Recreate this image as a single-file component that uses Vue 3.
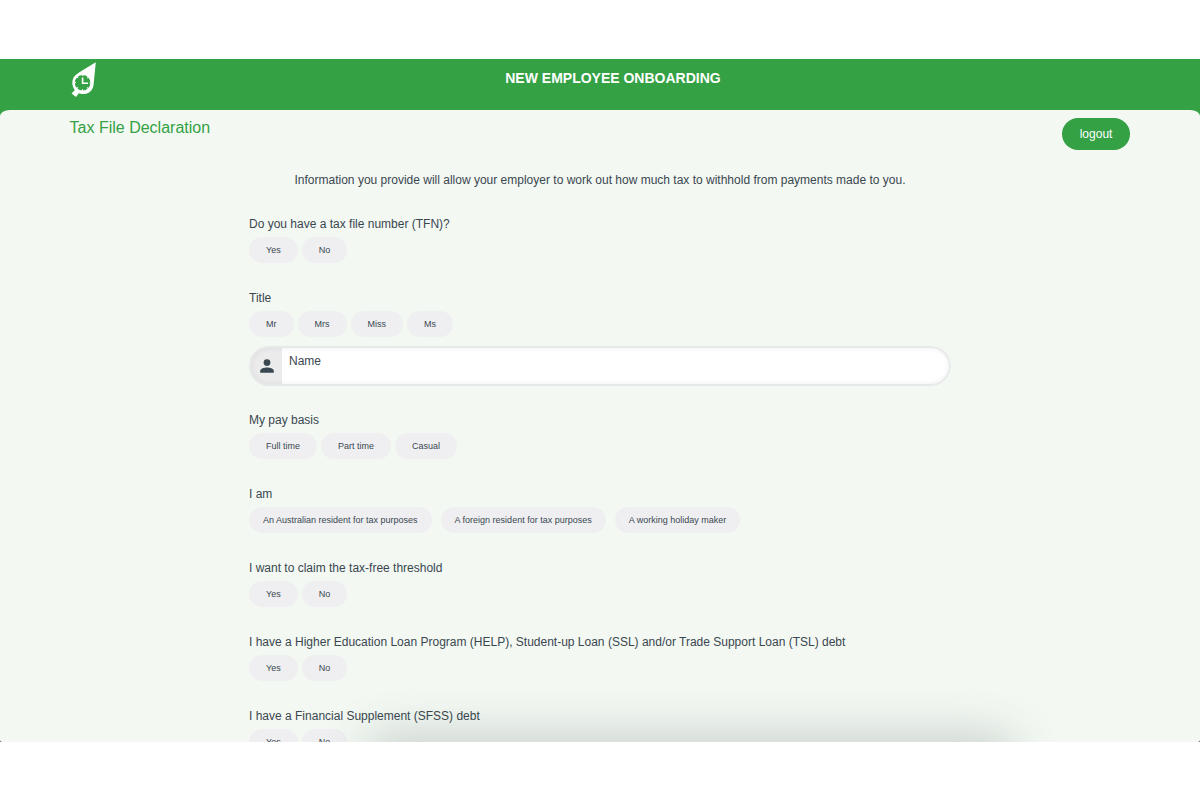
<script setup>
import { ref } from 'vue'

const answers = ref({})
const name = ref('')

const before = [
  { id: 'tfn', label: 'Do you have a tax file number (TFN)?', options: ['Yes', 'No'] },
  { id: 'title', label: 'Title', options: ['Mr', 'Mrs', 'Miss', 'Ms'] },
]
const after = [
  { id: 'basis', label: 'My pay basis', options: ['Full time', 'Part time', 'Casual'] },
  {
    id: 'residency',
    label: 'I am',
    wide: true,
    options: [
      'An Australian resident for tax purposes',
      'A foreign resident for tax purposes',
      'A working holiday maker',
    ],
  },
  { id: 'threshold', label: 'I want to claim the tax-free threshold', options: ['Yes', 'No'] },
  {
    id: 'help',
    label: 'I have a Higher Education Loan Program (HELP), Student-up Loan (SSL) and/or Trade Support Loan (TSL) debt',
    options: ['Yes', 'No'],
  },
  { id: 'sfss', label: 'I have a Financial Supplement (SFSS) debt', options: ['Yes', 'No'] },
]
</script>

<template>
  <div class="screen">
    <div class="app">
      <header class="bar">
        <div class="wrap bar-row">
          <svg class="logo" viewBox="0 0 26 36" aria-hidden="true">
            <path
              fill="#fff"
              fill-rule="evenodd"
              d="M25.8 0.3 L23.6 22.5 C23 29 18 32.6 11.4 32 L8.8 31.3 L6 34.9 L1.6 31.4 L4.8 28 C1.5 23.8 1.4 17.6 5.2 13.6 C6.6 12.2 8 11.2 9.8 10 Z M12.6 12.9 A7.8 7.8 0 1 0 12.6 28.5 A7.8 7.8 0 1 0 12.6 12.9 Z"
            />
            <circle cx="12.6" cy="20.7" r="7.3" fill="none" stroke="#fff" stroke-width="1.4" stroke-dasharray="1.2 4.533" stroke-dashoffset="0.6" />
            <path d="M12.6 15.4 V21.2 H18" fill="none" stroke="#fff" stroke-width="1.6" />
          </svg>
          <h1>NEW EMPLOYEE ONBOARDING</h1>
        </div>
      </header>
      <main class="sheet">
        <div class="wrap sheet-head">
          <h2>Tax File Declaration</h2>
          <button type="button" class="logout">logout</button>
        </div>
        <form class="form" @submit.prevent>
          <p class="intro">
            Information you provide will allow your employer to work out how much tax to withhold from payments made to you.
          </p>
          <section v-for="q in before" :key="q.id" class="question" role="group" :aria-labelledby="q.id">
            <p :id="q.id" class="label">{{ q.label }}</p>
            <div class="options">
              <button
                v-for="o in q.options"
                :key="o"
                type="button"
                class="pill"
                :aria-pressed="answers[q.id] === o"
                @click="answers[q.id] = o"
              >{{ o }}</button>
            </div>
          </section>
          <div class="field">
            <span class="addon">
              <svg viewBox="0 0 14 14" aria-hidden="true">
                <circle cx="7" cy="3.6" r="3.4" />
                <path d="M0.2 13.8 V11.8 C0.2 9.5 4.4 8.4 7 8.4 S13.8 9.5 13.8 11.8 V13.8 Z" />
              </svg>
            </span>
            <div class="entry">
              <label for="name">Name</label>
              <input id="name" v-model="name" type="text" />
            </div>
          </div>
          <section v-for="q in after" :key="q.id" class="question" role="group" :aria-labelledby="q.id">
            <p :id="q.id" class="label">{{ q.label }}</p>
            <div class="options" :class="{ wide: q.wide }">
              <button
                v-for="o in q.options"
                :key="o"
                type="button"
                class="pill"
                :aria-pressed="answers[q.id] === o"
                @click="answers[q.id] = o"
              >{{ o }}</button>
            </div>
          </section>
        </form>
      </main>
      <div class="shade"></div>
    </div>
  </div>
</template>

<style>
body {
  margin: 0;
  background: #fff;
}
</style>

<style scoped>
.screen {
  box-sizing: border-box;
  height: 100vh;
  padding: 59px 0 58px;
  font-family: "Liberation Sans", Arial, sans-serif;
  color: #3a4750;
}
.app {
  position: relative;
  display: flex;
  flex-direction: column;
  height: 100%;
  overflow: hidden;
  background: linear-gradient(#34a144 50%, #3a4750 50%);
}
.wrap {
  width: 88.4%;
  margin: 0 auto;
}
.bar-row {
  display: grid;
  grid-template-columns: 26px 1fr;
  height: 51px;
}
.logo {
  width: 26px;
  height: 36px;
  margin-top: 3px;
}
h1 {
  margin: 9px 0 0;
  font-size: 14px;
  line-height: 20px;
  font-weight: 700;
  text-align: center;
  color: #fff;
}
.sheet {
  flex: 1;
  min-height: 0;
  overflow-y: auto;
  scrollbar-width: none;
  background: #f3f8f3;
  border-radius: 10px 10px 2px 2px / 6px 6px 2px 2px;
}
.sheet-head {
  display: flex;
  justify-content: space-between;
  align-items: flex-start;
  padding-top: 8px;
}
h2 {
  margin: 0;
  font-size: 16px;
  line-height: 20px;
  font-weight: 400;
  color: #34a144;
}
button {
  border: 0;
  font-family: inherit;
  cursor: pointer;
}
.logout {
  height: 32px;
  padding: 0 18px;
  border-radius: 16px;
  background: #34a144;
  color: #fff;
  font-size: 12px;
}
.form {
  width: 58.5%;
  margin: 0 auto;
}
.intro {
  margin: 22px 0 28px;
  font-size: 12px;
  line-height: 16px;
  text-align: center;
}
.question {
  margin-bottom: 27px;
}
.label {
  margin: 0 0 5px;
  font-size: 12px;
  line-height: 16px;
}
.options {
  display: flex;
  gap: 4px;
}
.options.wide {
  gap: 9px;
}
.pill {
  height: 26px;
  padding: 0 17px;
  border-radius: 13px;
  background: #efeff2;
  color: #3a4750;
  font-size: 9px;
}
.wide .pill {
  padding: 0 14px;
}
.field {
  position: relative;
  display: flex;
  box-sizing: border-box;
  height: 40px;
  margin: -18px 0 26px;
  overflow: hidden;
  border-radius: 20px;
  background: #fff;
}
.field::after {
  content: "";
  position: absolute;
  inset: 0;
  border: 2px solid #e6e9e7;
  border-radius: 20px;
  box-shadow: inset 0 0 5px rgba(0, 0, 0, 0.08);
  pointer-events: none;
}
.addon {
  display: flex;
  align-items: center;
  justify-content: center;
  box-sizing: border-box;
  width: 33px;
  padding-left: 2px;
  background: #ebebeb;
}
.addon svg {
  width: 14px;
  height: 14px;
  fill: #3a4750;
}
.entry {
  flex: 1;
  display: flex;
  flex-direction: column;
  padding: 7px 16px 0 7px;
}
.entry label {
  font-size: 12px;
  line-height: 16px;
}
.entry input {
  height: 12px;
  padding: 0;
  border: 0;
  outline: 0;
  background: transparent;
  font: inherit;
  font-size: 11px;
}
.shade {
  position: absolute;
  left: 31%;
  right: 16%;
  bottom: -24px;
  height: 20px;
  border-radius: 20px;
  box-shadow: 0 0 48px 6px rgba(50, 65, 55, 0.3);
  pointer-events: none;
}
</style>
